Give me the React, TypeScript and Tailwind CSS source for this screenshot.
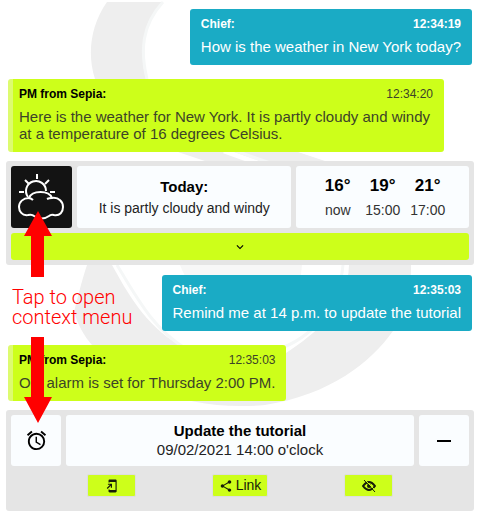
import type { ReactNode } from "react";
import {
  MdAddToHomeScreen,
  MdAlarm,
  MdExpandMore,
  MdRemove,
  MdShare,
} from "react-icons/md";

type MessageProps = { sender: string; time: string; own?: boolean; children: ReactNode };

function Message({ sender, time, own = false, children }: MessageProps) {
  return (
    <article
      className={
        own
          ? "mr-2 ml-auto w-fit rounded-[3px] bg-[#1aabc5] px-[11px] pt-2 pb-[10px] text-white"
          : "mr-9 ml-2 w-fit rounded-[3px] border-l-[5px] border-[#ddfb70] bg-[#cdff1a] pt-2 pr-[11px] pb-[10px] pl-[6px] text-[#3c4428]"
      }
    >
      <header className="mb-[6px] flex justify-between text-[12px] leading-[15px]">
        <b className={own ? "" : "text-black"}>{sender}:</b>
        <time className={own ? "font-bold" : ""}>{time}</time>
      </header>
      <p className="text-[15px] leading-[17px]">{children}</p>
    </article>
  );
}

function Watermark() {
  return (
    <svg className="absolute top-0 left-0 h-[520px] w-[480px]" viewBox="0 0 480 520" aria-hidden="true">
      <path
        fill="#eeeeee"
        d="M107 2C85 33 86 75 107 101C125 128 150 141 178 152L205 161C310 194 351 225 349 265C348 308 316 333 286 353C245 370 205 363 180 345C145 326 126 290 112 265H87C82 280 77 300 74 312C78 325 84 336 92 345C120 385 190 412 265 405C330 395 371 362 393 331C408 308 411 290 411 265C400 220 380 178 325 161L298 152C210 131 150 110 144 70C140 40 145 19 163 2Z"
      />
      <path fill="#f7f7f7" d="M180 265H302C300 290 292 310 285 320C240 324 195 305 180 265Z" />
      <path fill="none" stroke="white" strokeWidth="5" d="M224 151L258 163" />
      <path
        fill="none"
        stroke="#f5f7f7"
        strokeWidth="3"
        d="M163 2C142 25 140 50 147 79M117 265C138 300 154 330 188 350M343 265C340 302 316 334 284 347M236 151L270 163"
      />
    </svg>
  );
}

function PartlyCloudyIcon() {
  return (
    <svg
      viewBox="0 0 61 62"
      className="size-full"
      fill="none"
      stroke="white"
      strokeWidth="2"
      strokeLinejoin="round"
      aria-hidden="true"
    >
      <path d="M26 8v5M14 14l4 4M38 14l-4 4M8 26h5M39 26h5" />
      <path d="M17 31A10 10 0 1 1 35 25" />
      <path d="M17 49C11 50 8 45 8 41C8 36 12 32 18 32C21 24 38 24 41 32C48 31 52 36 52 41C52 46 49 50 43 49Q40 48 38 50Q31 55 23 50Q21 48 17 49Z" />
      <path d="M17 32q3 0 5 2M41 32q-3 0-5 1" />
    </svg>
  );
}

function HiddenIcon() {
  return (
    <svg viewBox="0 0 14 14" className="size-[14px]" fill="none" stroke="currentColor" aria-hidden="true">
      <path strokeWidth="2" d="M1 7Q4 3 7 3T13 7Q10 11 7 11T1 7Z" />
      <circle cx="7" cy="7" r="2" fill="currentColor" stroke="none" />
      <path stroke="#cdff1a" strokeWidth="1" d="M3 1l11 11" />
      <path strokeWidth="1" d="M2 1l11 12" />
    </svg>
  );
}

function Arrow({ down = false }: { down?: boolean }) {
  return down ? (
    <svg className="block h-[86px] w-7" viewBox="0 0 28 86" fill="#ff0000" aria-hidden="true">
      <path d="M7 0h13v60h8L14 86 0 60h7Z" />
    </svg>
  ) : (
    <svg className="block h-[66px] w-7" viewBox="0 0 28 66" fill="#ff0000" aria-hidden="true">
      <path d="M14 0 28 25h-8v41H7V25H0Z" />
    </svg>
  );
}

const forecast = [
  { degrees: "16°", time: "now" },
  { degrees: "19°", time: "15:00" },
  { degrees: "21°", time: "17:00" },
];

const tile = "rounded-[3px] bg-[#fafdff]";
const action =
  "flex h-[23px] items-center justify-center rounded-[2px] border border-[#dedede] bg-[#cdff1a] text-[#171d08]";

export default function App() {
  return (
    <main className="relative bg-white pt-[9px] pb-[9px] font-['Liberation_Sans',Arial,sans-serif] text-black">
      <Watermark />
      <div className="relative">
        <Message sender="Chief" time="12:34:19" own>
          How is the weather in New York today?
        </Message>
        <div className="mt-[14px]">
          <Message sender="PM from Sepia" time="12:34:20">
            Here is the weather for New York. It is partly cloudy and windy at a temperature of 16 degrees
            Celsius.
          </Message>
        </div>

        <section className="mx-[6px] mt-[9px] rounded-[3px] bg-[#e5e5e5] p-[5px]">
          <div className="flex h-[62px] gap-[5px]">
            <button type="button" aria-label="Weather" className="w-[61px] shrink-0 rounded-[3px] bg-[#131313]">
              <PartlyCloudyIcon />
            </button>
            <div className={`${tile} flex flex-[215] flex-col items-center pt-[11px]`}>
              <b className="text-[15px] leading-5">Today:</b>
              <span className="text-[14px] leading-[22px] text-[#222]">It is partly cloudy and windy</span>
            </div>
            <div className={`${tile} flex flex-[173] justify-center gap-x-[11px] pt-2`}>
              {forecast.map((f) => (
                <div key={f.time} className="flex w-[34px] flex-col items-center">
                  <b className="text-[17px] leading-6">{f.degrees}</b>
                  <span className="text-[14px] leading-6 text-[#333]">{f.time}</span>
                </div>
              ))}
            </div>
          </div>
          <button
            type="button"
            aria-label="Show more"
            className="mt-[5px] flex h-[27px] w-full items-center justify-center rounded-[3px] bg-[#cdff1a]"
          >
            <MdExpandMore className="size-[14px]" />
          </button>
        </section>

        <div className="mt-[10px]">
          <Message sender="Chief" time="12:35:03" own>
            Remind me at 14 p.m. to update the tutorial
          </Message>
        </div>
        <div className="mt-[14px]">
          <Message sender="PM from Sepia" time="12:35:03">
            Ok, alarm is set for Thursday 2:00 PM.
          </Message>
        </div>

        <section className="mx-[6px] mt-[9px] rounded-[3px] bg-[#e5e5e5] p-[5px] pb-[14px]">
          <div className="flex h-[51px] gap-[5px]">
            <button type="button" aria-label="Alarm" className={`${tile} flex w-[50px] shrink-0 items-center justify-center`}>
              <MdAlarm className="size-[23px]" />
            </button>
            <div className={`${tile} flex flex-1 flex-col items-center pt-[7px]`}>
              <b className="text-[15px] leading-[18px]">Update the tutorial</b>
              <span className="text-[15px] leading-5 text-[#222]">09/02/2021 14:00 o'clock</span>
            </div>
            <button type="button" aria-label="Remove" className={`${tile} flex w-[50px] shrink-0 items-center justify-center`}>
              <MdRemove className="size-6" />
            </button>
          </div>
          <div className="mt-2 flex justify-evenly">
            <button type="button" aria-label="Add to home screen" className={`${action} w-[49px]`}>
              <MdAddToHomeScreen className="size-[14px]" />
            </button>
            <button type="button" className={`${action} w-[56px] gap-[3px] text-[14px]`}>
              <MdShare className="size-[14px] shrink-0" />
              Link
            </button>
            <button type="button" aria-label="Hide" className={`${action} w-[49px]`}>
              <HiddenIcon />
            </button>
          </div>
        </section>
      </div>

      <aside className="pointer-events-none absolute top-[211px] left-3 text-[#ff0000]">
        <div className="pl-3">
          <Arrow />
        </div>
        <p className="my-[10px] font-['Roboto',sans-serif] text-[20px] leading-5 font-light">
          Tap to open
          <br />
          context menu
        </p>
        <div className="pl-3">
          <Arrow down />
        </div>
      </aside>
    </main>
  );
}
